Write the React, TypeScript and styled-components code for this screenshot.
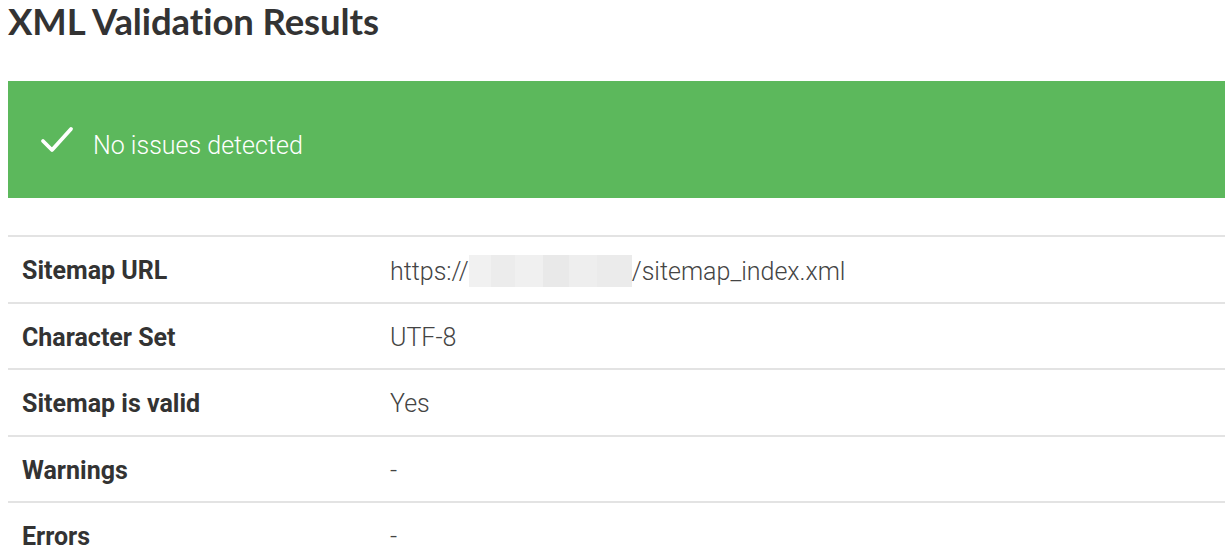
import styled, { createGlobalStyle } from "styled-components";

const GlobalStyle = createGlobalStyle`
  html, body {
    margin: 0;
    padding: 0;
    background: #fff;
    overflow: hidden;
  }
  body {
    font-family: "Roboto", "Liberation Sans", sans-serif;
  }
`;

const Page = styled.div`
  padding-left: 8px;
  width: 1240px;
`;

const Title = styled.h1`
  font-family: "Lato", "Liberation Sans", sans-serif;
  font-weight: 700;
  font-size: 36.5px;
  line-height: 42px;
  color: #333;
  margin: 0;
  padding: 0;
  letter-spacing: -0.1px;
`;

const Banner = styled.div`
  margin-top: 39px;
  height: 117px;
  background: #5cb85c;
  display: flex;
  align-items: center;
  padding-left: 32px;
  gap: 19px;
  color: #fff;
`;

const BannerText = styled.span`
  font-weight: 300;
  font-size: 25px;
  margin-top: 11px;
`;

const Table = styled.table`
  margin-top: 37px;
  width: 100%;
  border-collapse: collapse;
  border-top: 2px solid #e3e3e3;
`;

const Row = styled.tr`
  border-bottom: 2px solid #e3e3e3;
  height: 66.5px;
`;

const Label = styled.td`
  font-weight: 700;
  font-size: 25px;
  color: #333;
  padding: 3px 0 0 14px;
  width: 368px;
`;

const Value = styled.td`
  font-weight: 300;
  font-size: 25px;
  color: #444;
  padding: 3px 0 0 0;
`;

const Blur = styled.span`
  display: inline-block;
  width: 163px;
  height: 32px;
  vertical-align: -7px;
  background: linear-gradient(
    90deg,
    #f1f1f1 0 22px,
    #ececec 22px 46px,
    #f0f0f0 46px 74px,
    #e9e9e9 74px 100px,
    #eeeeee 100px 128px,
    #ebebeb 128px 163px
  );
`;

const Check = () => (
  <svg width="34" height="28" viewBox="0 0 34 28" fill="none">
    <path
      d="M3 15 L12 24 L31 3"
      stroke="#fff"
      strokeWidth="3.8"
      strokeLinecap="round"
      strokeLinejoin="round"
    />
  </svg>
);

const rows: { label: string; value: React.ReactNode }[] = [
  {
    label: "Sitemap URL",
    value: (
      <>
        https://<Blur />/sitemap_index.xml
      </>
    ),
  },
  { label: "Character Set", value: "UTF-8" },
  { label: "Sitemap is valid", value: "Yes" },
  { label: "Warnings", value: "-" },
  { label: "Errors", value: "-" },
];

export default function App() {
  return (
    <Page>
      <GlobalStyle />
      <Title>XML Validation Results</Title>
      <Banner>
        <Check />
        <BannerText>No issues detected</BannerText>
      </Banner>
      <Table>
        <tbody>
          {rows.map((r) => (
            <Row key={r.label}>
              <Label>{r.label}</Label>
              <Value>{r.value}</Value>
            </Row>
          ))}
        </tbody>
      </Table>
    </Page>
  );
}
